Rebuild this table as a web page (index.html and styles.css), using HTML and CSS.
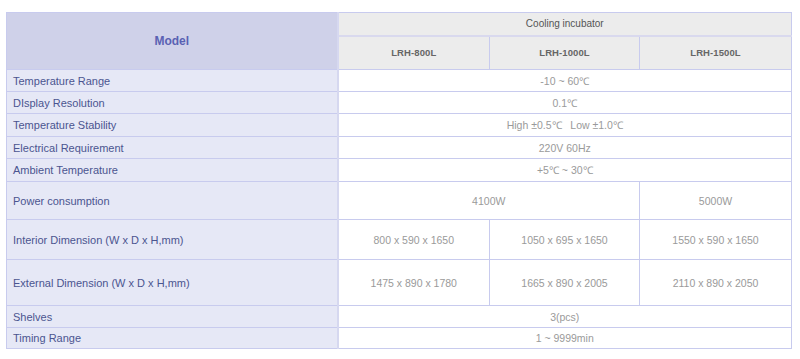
FILE: index.html
```html
<!DOCTYPE html>
<html>
<head>
<meta charset="utf-8">
<link rel="stylesheet" href="styles.css">
</head>
<body>
<table class="spec">
  <colgroup>
    <col class="c-label"><col class="c-a"><col class="c-b"><col class="c-c">
  </colgroup>
  <tr class="h1">
    <th class="model" rowspan="2">Model</th>
    <th class="head" colspan="3">Cooling incubator</th>
  </tr>
  <tr class="h2">
    <th class="head sub">LRH-800L</th>
    <th class="head sub">LRH-1000L</th>
    <th class="head sub">LRH-1500L</th>
  </tr>
  <tr class="r22"><td class="label">Temperature Range</td><td class="val" colspan="3">-10 ~ 60℃</td></tr>
  <tr class="r22"><td class="label">DIsplay Resolution</td><td class="val" colspan="3">0.1℃</td></tr>
  <tr class="r23"><td class="label">Temperature Stability</td><td class="val" colspan="3">High ±0.5℃&nbsp;&nbsp; Low ±1.0℃</td></tr>
  <tr class="r22"><td class="label">Electrical Requirement</td><td class="val" colspan="3">220V 60Hz</td></tr>
  <tr class="r23"><td class="label">Ambient Temperature</td><td class="val" colspan="3">+5℃ ~ 30℃</td></tr>
  <tr class="r38"><td class="label">Power consumption</td><td class="val" colspan="2">4100W</td><td class="val">5000W</td></tr>
  <tr class="r40"><td class="label">Interior Dimension (W x D x H,mm)</td><td class="val">800 x 590 x 1650</td><td class="val">1050 x 695 x 1650</td><td class="val">1550 x 590 x 1650</td></tr>
  <tr class="r46"><td class="label">External Dimension (W x D x H,mm)</td><td class="val">1475 x 890 x 1780</td><td class="val">1665 x 890 x 2005</td><td class="val">2110 x 890 x 2050</td></tr>
  <tr class="r22"><td class="label">Shelves</td><td class="val" colspan="3">3(pcs)</td></tr>
  <tr class="r21"><td class="label">Timing Range</td><td class="val" colspan="3">1 ~ 9999min</td></tr>
</table>
</body>
</html>
```
FILE: styles.css
```css
html, body {
  margin: 0;
  padding: 0;
  background: #ffffff;
}
body {
  padding: 12px 0 0 6px;
  font-family: "Liberation Sans", Arial, sans-serif;
}
.spec {
  border-collapse: collapse;
  table-layout: fixed;
  width: 785px;
}
.c-label { width: 331px; }
.c-a { width: 152px; }
.c-b { width: 150px; }
.c-c { width: 152px; }
.spec th, .spec td {
  border: 1px solid #c8cbee;
  padding: 0;
  box-sizing: border-box;
}
.spec .model {
  background: #cfd1e9;
  color: #5a61b3;
  font-size: 12px;
  font-weight: bold;
  text-align: center;
  border-right: 2px solid #d6d8f0;
}
.spec .head {
  background: #ececec;
  color: #555555;
  font-size: 10px;
  font-weight: normal;
  text-align: center;
}
.spec .h1 .head { height: 23px; border-bottom: 2px solid #d9d9ee; }
.spec .h2 .head { height: 34px; }
.spec .sub { color: #666666; font-weight: bold; font-size: 9.5px; letter-spacing: 0.1px; }
.spec .label {
  background: #e6e8f6;
  color: #4b5590;
  font-size: 11px;
  text-align: left;
  padding-left: 6px;
  border-right: 2px solid #d6d8f0;
}
.spec .val {
  color: #9a9a9a;
  font-size: 10.5px;
  text-align: center;
}
.r21 td { height: 21px; }
.r22 td { height: 22px; }
.r23 td { height: 23px; }
.r38 td { height: 38px; }
.r40 td { height: 40px; }
.r46 td { height: 46px; }
```
